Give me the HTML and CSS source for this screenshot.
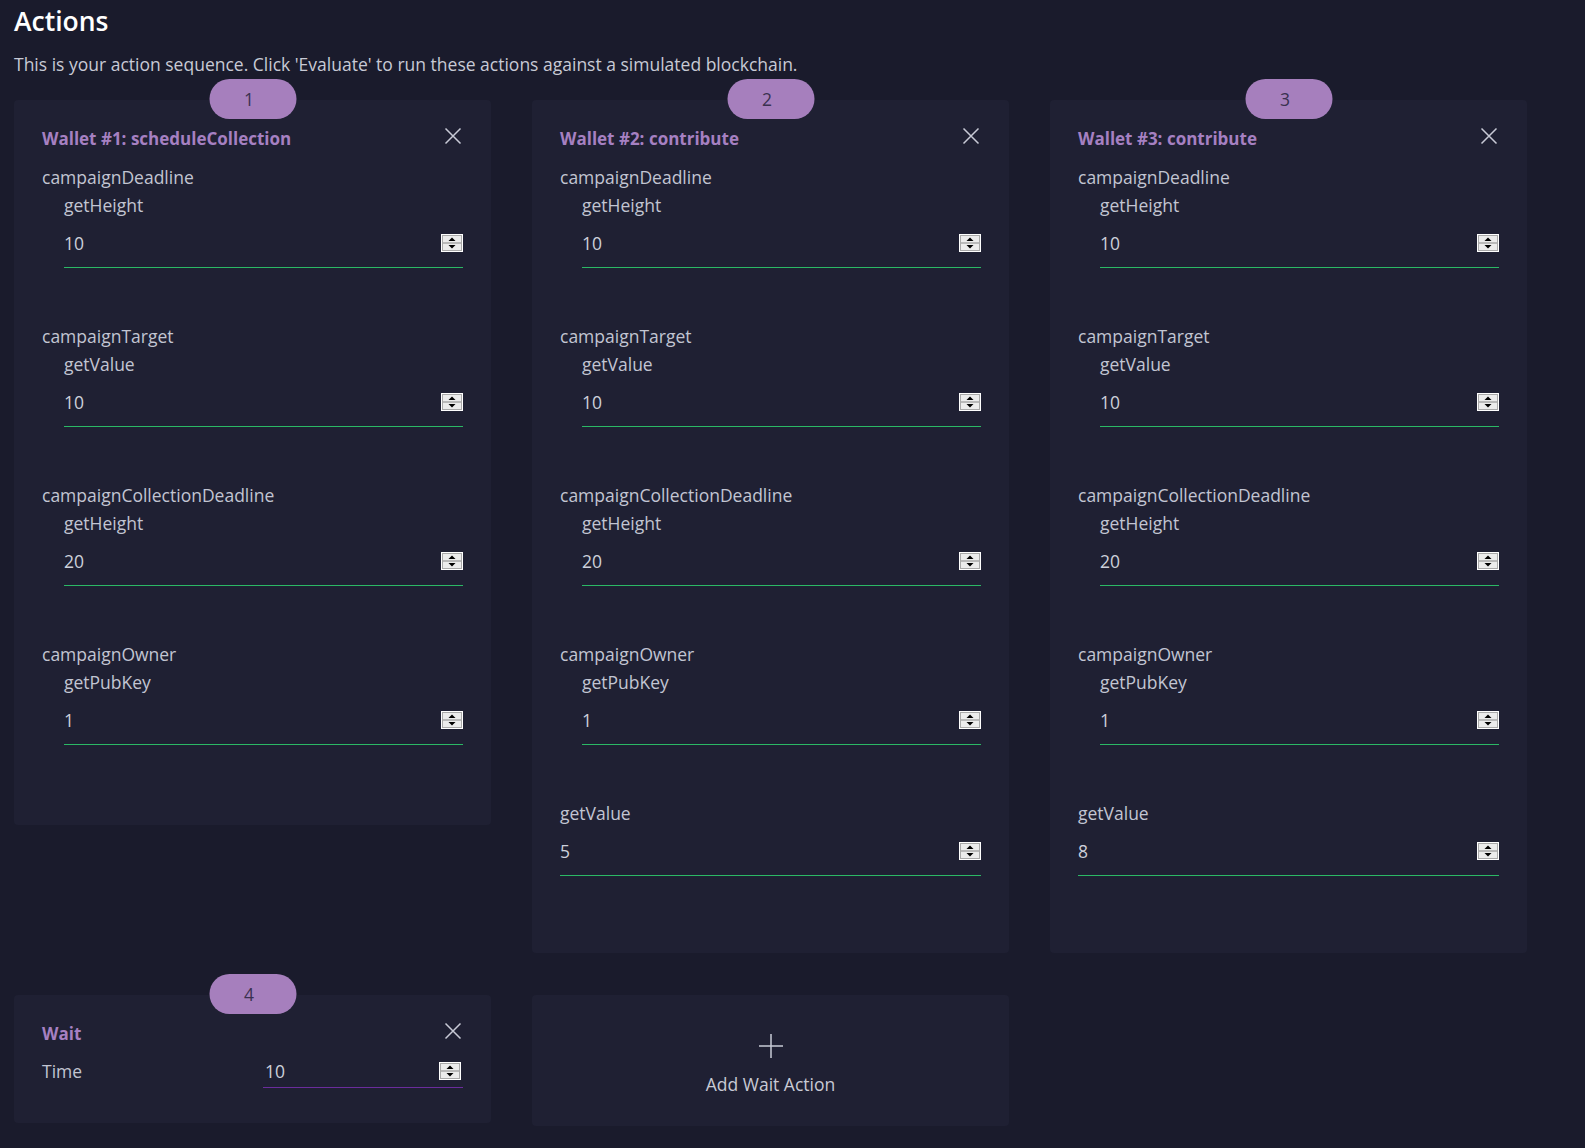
FILE: index.html
```html
<!DOCTYPE html>
<html lang="en">
<head>
<meta charset="utf-8">
<title>Actions</title>
<link rel="stylesheet" href="styles.css">
</head>
<body>
<svg class="defs" width="0" height="0" aria-hidden="true">
  <symbol id="spin" viewBox="0 0 22 18">
    <rect x="0" y="0" width="22" height="18" fill="#ffffff"/>
    <rect x="1" y="1" width="20" height="16" fill="#a9a9a9"/>
    <rect x="2" y="2" width="18" height="14" fill="#ececec"/>
    <rect x="2" y="8" width="18" height="2" fill="#b9b9b9"/>
    <polygon points="7.5,7 14.5,7 11,3.5" fill="#000"/>
    <polygon points="7.5,11 14.5,11 11,14.5" fill="#000"/>
  </symbol>
  <symbol id="close" viewBox="0 0 20 20">
    <path d="M2.5 2.5 L17.5 17.5 M17.5 2.5 L2.5 17.5" stroke="currentColor" stroke-width="1.5" fill="none"/>
  </symbol>
</svg>

<main class="page">
  <h1 class="page-title">Actions</h1>
  <p class="page-intro">This is your action sequence. Click 'Evaluate' to run these actions against a simulated blockchain.</p>

  <div class="actions-grid">
    <!-- Card 1 -->
    <section class="card">
      <span class="badge">1</span>
      <header class="card-head">
        <h2 class="card-title">Wallet #1: scheduleCollection</h2>
        <svg class="close" width="20" height="20"><use href="#close"/></svg>
      </header>
      <div class="param">
        <div class="param-name">campaignDeadline</div>
        <div class="param-body">
          <div class="sub-label">getHeight</div>
          <div class="field"><span class="field-value">10</span><svg class="spin" width="22" height="18"><use href="#spin"/></svg></div>
        </div>
      </div>
      <div class="param">
        <div class="param-name">campaignTarget</div>
        <div class="param-body">
          <div class="sub-label">getValue</div>
          <div class="field"><span class="field-value">10</span><svg class="spin" width="22" height="18"><use href="#spin"/></svg></div>
        </div>
      </div>
      <div class="param">
        <div class="param-name">campaignCollectionDeadline</div>
        <div class="param-body">
          <div class="sub-label">getHeight</div>
          <div class="field"><span class="field-value">20</span><svg class="spin" width="22" height="18"><use href="#spin"/></svg></div>
        </div>
      </div>
      <div class="param">
        <div class="param-name">campaignOwner</div>
        <div class="param-body">
          <div class="sub-label">getPubKey</div>
          <div class="field"><span class="field-value">1</span><svg class="spin" width="22" height="18"><use href="#spin"/></svg></div>
        </div>
      </div>
    </section>

    <!-- Card 2 -->
    <section class="card card-tall">
      <span class="badge">2</span>
      <header class="card-head">
        <h2 class="card-title">Wallet #2: contribute</h2>
        <svg class="close" width="20" height="20"><use href="#close"/></svg>
      </header>
      <div class="param">
        <div class="param-name">campaignDeadline</div>
        <div class="param-body">
          <div class="sub-label">getHeight</div>
          <div class="field"><span class="field-value">10</span><svg class="spin" width="22" height="18"><use href="#spin"/></svg></div>
        </div>
      </div>
      <div class="param">
        <div class="param-name">campaignTarget</div>
        <div class="param-body">
          <div class="sub-label">getValue</div>
          <div class="field"><span class="field-value">10</span><svg class="spin" width="22" height="18"><use href="#spin"/></svg></div>
        </div>
      </div>
      <div class="param">
        <div class="param-name">campaignCollectionDeadline</div>
        <div class="param-body">
          <div class="sub-label">getHeight</div>
          <div class="field"><span class="field-value">20</span><svg class="spin" width="22" height="18"><use href="#spin"/></svg></div>
        </div>
      </div>
      <div class="param">
        <div class="param-name">campaignOwner</div>
        <div class="param-body">
          <div class="sub-label">getPubKey</div>
          <div class="field"><span class="field-value">1</span><svg class="spin" width="22" height="18"><use href="#spin"/></svg></div>
        </div>
      </div>
      <div class="param">
        <div class="param-name">getValue</div>
        <div class="field"><span class="field-value">5</span><svg class="spin" width="22" height="18"><use href="#spin"/></svg></div>
      </div>
    </section>

    <!-- Card 3 -->
    <section class="card card-tall">
      <span class="badge">3</span>
      <header class="card-head">
        <h2 class="card-title">Wallet #3: contribute</h2>
        <svg class="close" width="20" height="20"><use href="#close"/></svg>
      </header>
      <div class="param">
        <div class="param-name">campaignDeadline</div>
        <div class="param-body">
          <div class="sub-label">getHeight</div>
          <div class="field"><span class="field-value">10</span><svg class="spin" width="22" height="18"><use href="#spin"/></svg></div>
        </div>
      </div>
      <div class="param">
        <div class="param-name">campaignTarget</div>
        <div class="param-body">
          <div class="sub-label">getValue</div>
          <div class="field"><span class="field-value">10</span><svg class="spin" width="22" height="18"><use href="#spin"/></svg></div>
        </div>
      </div>
      <div class="param">
        <div class="param-name">campaignCollectionDeadline</div>
        <div class="param-body">
          <div class="sub-label">getHeight</div>
          <div class="field"><span class="field-value">20</span><svg class="spin" width="22" height="18"><use href="#spin"/></svg></div>
        </div>
      </div>
      <div class="param">
        <div class="param-name">campaignOwner</div>
        <div class="param-body">
          <div class="sub-label">getPubKey</div>
          <div class="field"><span class="field-value">1</span><svg class="spin" width="22" height="18"><use href="#spin"/></svg></div>
        </div>
      </div>
      <div class="param">
        <div class="param-name">getValue</div>
        <div class="field"><span class="field-value">8</span><svg class="spin" width="22" height="18"><use href="#spin"/></svg></div>
      </div>
    </section>

    <!-- Wait card -->
    <section class="card card-wait">
      <span class="badge">4</span>
      <header class="card-head">
        <h2 class="card-title">Wait</h2>
        <svg class="close" width="20" height="20"><use href="#close"/></svg>
      </header>
      <div class="wait-row">
        <span class="wait-label">Time</span>
        <div class="field field-wait"><span class="field-value">10</span><svg class="spin" width="22" height="18"><use href="#spin"/></svg></div>
      </div>
    </section>

    <!-- Add wait -->
    <section class="card card-add">
      <svg class="plus" width="24" height="24" viewBox="0 0 24 24"><path d="M12 0 V24 M0 12 H24" stroke="currentColor" stroke-width="1.5" fill="none"/></svg>
      <span class="add-label">Add Wait Action</span>
    </section>
  </div>
</main>
</body>
</html>
```

FILE: styles.css
```css
* { box-sizing: border-box; }

html, body {
  margin: 0;
  padding: 0;
  background: #1a1b2c;
}

body {
  font-family: "Open Sans", "Liberation Sans", sans-serif;
  color: #c2c5d2;
  min-height: 1148px;
}

.defs { position: absolute; width: 0; height: 0; overflow: hidden; }

.page {
  padding: 3px 0 0 14px;
}

.page-title {
  margin: 0;
  font-size: 26.5px;
  line-height: 36px;
  font-weight: 600;
  color: #ffffff;
}

.page-intro {
  margin: 13px 0 0;
  font-size: 17.5px;
  line-height: 24px;
  color: #c8cad5;
}

.actions-grid {
  display: grid;
  grid-template-columns: repeat(3, 477px);
  column-gap: 41px;
  row-gap: 42px;
  align-items: start;
  margin-top: 24px;
}

.card {
  position: relative;
  background: #1f2033;
  border-radius: 4px;
  padding: 27px 28px 80px;
}

.card-tall {
  padding-bottom: 77px;
}

.badge {
  position: absolute;
  top: -21px;
  left: 50%;
  transform: translateX(-50%);
  width: 87px;
  height: 40px;
  padding-right: 7px;
  border-radius: 20px;
  background: #a67fbd;
  color: #3a3150;
  font-size: 17.5px;
  line-height: 40px;
  text-align: center;
}

.card-head {
  display: flex;
  justify-content: space-between;
  align-items: flex-start;
  margin-bottom: 12px;
}

.card-title {
  margin: 0;
  font-size: 17px;
  line-height: 24px;
  font-weight: 700;
  color: #a680c2;
}

.close {
  color: #c8cad6;
  margin-top: -1.5px;
  flex: none;
}

.param {
  margin-bottom: 54px;
}

.param:last-child {
  margin-bottom: 0;
}

.param-name,
.sub-label {
  font-size: 17.5px;
  line-height: 28px;
}

.param-body {
  padding-left: 22px;
}

.field {
  display: flex;
  align-items: center;
  justify-content: space-between;
  padding: 12px 0;
  border-bottom: 1px solid #2bb865;
}

.field-value {
  font-size: 17.5px;
  line-height: 24px;
  color: #cdd0db;
}

.spin { flex: none; display: block; }

.wait-row {
  display: flex;
  justify-content: space-between;
  align-items: flex-start;
}

.wait-label {
  font-size: 17.5px;
  line-height: 24px;
  padding-top: 1px;
}

.field-wait {
  width: 200px;
  padding: 1px 2px 4px 2px;
  border-bottom: 1px solid #6a2c9c;
}

.card-wait {
  padding-bottom: 35px;
}

.card-add {
  height: 131px;
  padding: 39px 0 0;
  display: flex;
  flex-direction: column;
  align-items: center;
  gap: 14px;
}

.plus {
  color: #c8cad6;
  display: block;
}

.add-label {
  font-size: 17.5px;
  line-height: 24px;
  color: #c8cad5;
}
```
